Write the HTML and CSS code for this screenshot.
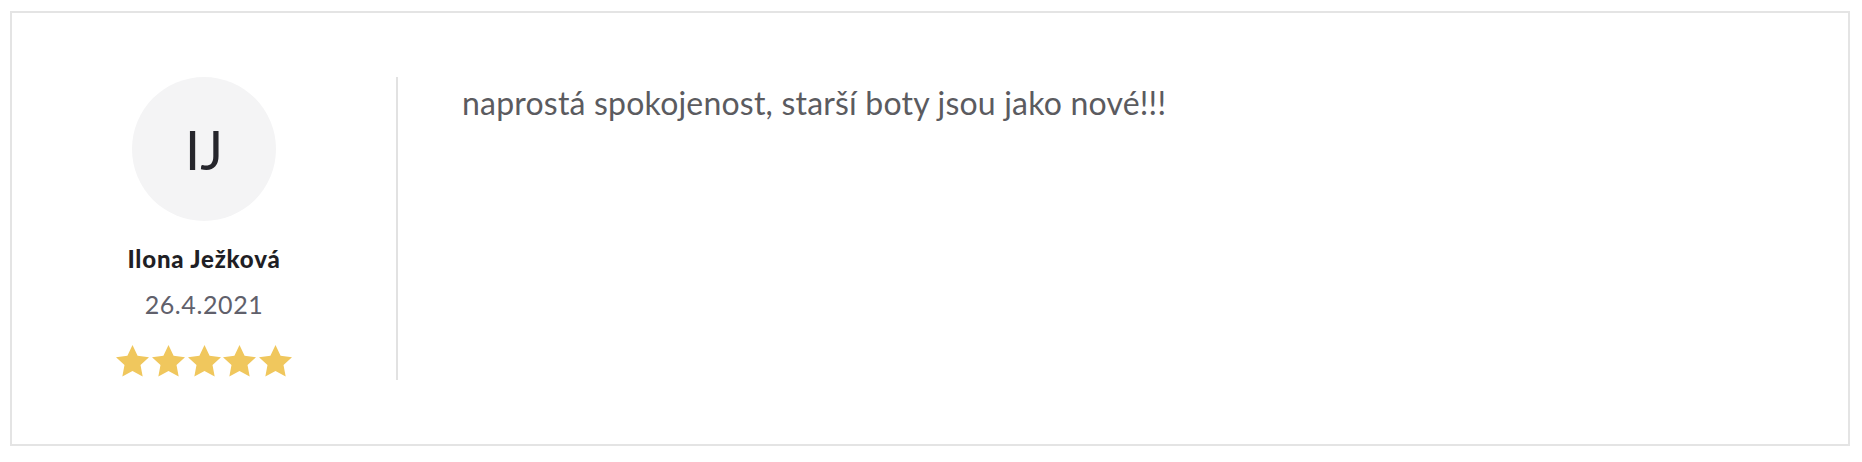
FILE: index.html
```html
<!DOCTYPE html>
<html lang="cs">
<head>
<meta charset="utf-8">
<title>Recenze</title>
<link rel="stylesheet" href="styles.css">
</head>
<body>
<div class="review">
  <div class="author">
    <div class="avatar">IJ</div>
    <div class="name">Ilona Ježková</div>
    <div class="date">26.4.2021</div>
    <div class="stars">
      <svg class="star" viewBox="1.3 1.2 21.4 20.5"><path d="M12 1.2l3.3 7 7.4.9-5.5 5.1 1.4 7.5L12 18l-6.6 3.7 1.4-7.5L1.3 9.1l7.4-.9z"/></svg>
      <svg class="star" viewBox="1.3 1.2 21.4 20.5"><path d="M12 1.2l3.3 7 7.4.9-5.5 5.1 1.4 7.5L12 18l-6.6 3.7 1.4-7.5L1.3 9.1l7.4-.9z"/></svg>
      <svg class="star" viewBox="1.3 1.2 21.4 20.5"><path d="M12 1.2l3.3 7 7.4.9-5.5 5.1 1.4 7.5L12 18l-6.6 3.7 1.4-7.5L1.3 9.1l7.4-.9z"/></svg>
      <svg class="star" viewBox="1.3 1.2 21.4 20.5"><path d="M12 1.2l3.3 7 7.4.9-5.5 5.1 1.4 7.5L12 18l-6.6 3.7 1.4-7.5L1.3 9.1l7.4-.9z"/></svg>
      <svg class="star" viewBox="1.3 1.2 21.4 20.5"><path d="M12 1.2l3.3 7 7.4.9-5.5 5.1 1.4 7.5L12 18l-6.6 3.7 1.4-7.5L1.3 9.1l7.4-.9z"/></svg>
    </div>
  </div>
  <div class="content">
    <p class="text">naprostá spokojenost, starší boty jsou jako nové!!!</p>
  </div>
</div>
</body>
</html>
```

FILE: styles.css
```css
html, body {
  margin: 0;
  padding: 0;
  background: #ffffff;
}
body {
  font-family: Lato, "Noto Sans", sans-serif;
}
.review {
  box-sizing: border-box;
  width: 1840px;
  height: 435px;
  margin: 11px 0 0 10px;
  border: 2px solid #e4e4e4;
  padding: 64px 0;
  display: flex;
}
.author {
  width: 384px;
  border-right: 2px solid #e2e2e2;
  display: flex;
  flex-direction: column;
  align-items: center;
}
.avatar {
  width: 144px;
  height: 144px;
  border-radius: 50%;
  background: #f4f4f5;
  color: #26262c;
  font-size: 54px;
  font-weight: 400;
  display: flex;
  align-items: center;
  justify-content: center;
}
.name {
  margin-top: 23px;
  font-size: 24px;
  font-weight: 900;
  letter-spacing: 0.8px;
  color: #1f1f25;
  line-height: 30px;
}
.date {
  margin-top: 14px;
  font-size: 25px;
  letter-spacing: 0.6px;
  color: #60606b;
  line-height: 32px;
}
.stars {
  margin-top: 25px;
  display: flex;
  gap: 2.6px;
}
.star {
  width: 33px;
  height: 31.6px;
  fill: #f0c75d;
}
.content {
  padding-left: 64px;
}
.text {
  margin: 0;
  font-size: 32px;
  letter-spacing: 0.2px;
  color: #5b5b5f;
  line-height: 40px;
  padding-top: 6px;
}
```
